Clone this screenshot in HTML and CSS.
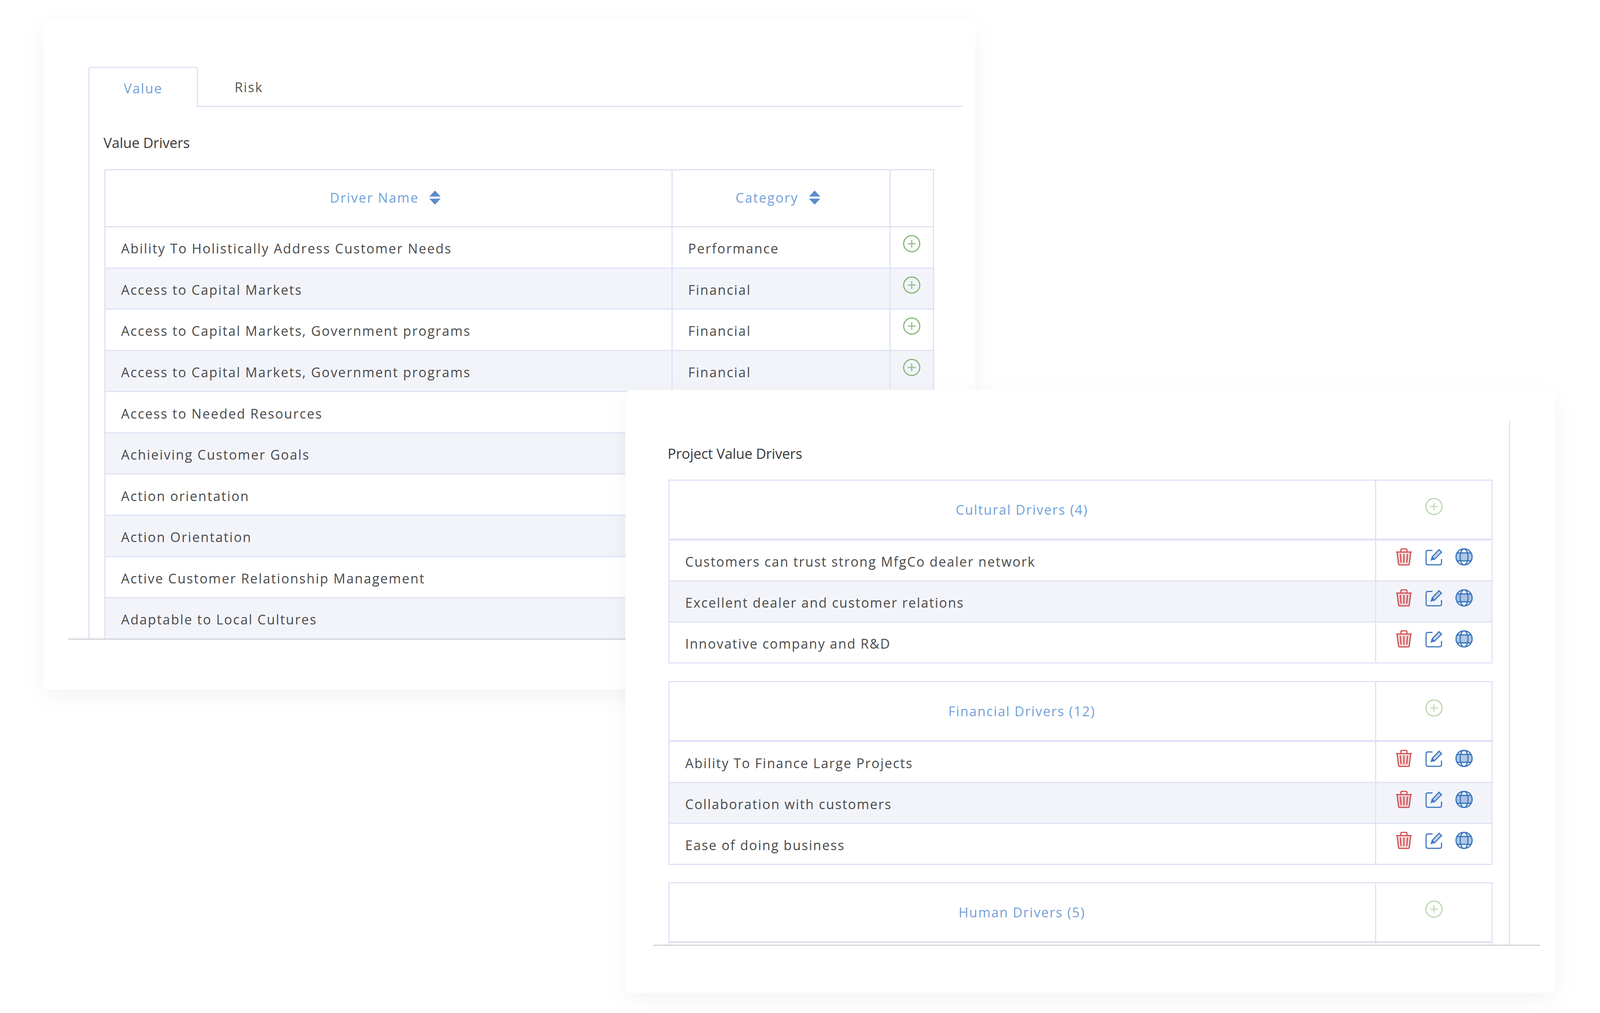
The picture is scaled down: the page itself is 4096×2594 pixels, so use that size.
FILE: index.html
```html
<!DOCTYPE html>
<html lang="en">
<head>
<meta charset="utf-8">
<title>Value Drivers</title>
<link rel="stylesheet" href="styles.css">
</head>
<body>
<svg class="defs" width="0" height="0" aria-hidden="true">
  <symbol id="i-plus" viewBox="0 0 48 48">
    <circle cx="24" cy="24" r="22.5" fill="none" stroke="currentColor" stroke-width="3"/>
    <path d="M24 13v22M13 24h22" fill="none" stroke="currentColor" stroke-width="3.400" opacity=".8"/>
  </symbol>
  <symbol id="i-sort" viewBox="0 0 32 40">
    <path d="M16 0 32 17H0ZM0 23H32L16 40Z" fill="currentColor"/>
  </symbol>
  <symbol id="i-trash" viewBox="0 0 46 48">
    <path d="M4 11 8 44q.5 2.500 3 2.500h24q2.500 0 3-2.500l4-33Z" fill="currentColor" opacity=".22"/>
    <path d="M1 10.500h44M14.500 10V5q0-3.500 3.500-3.500h10q3.500 0 3.500 3.500v5M4 11 8 44q.5 2.500 3 2.500h24q2.500 0 3-2.500l4-33M13 16l2 24M23 16v24M33 16l-2 24" fill="none" stroke="currentColor" stroke-width="3.200"/>
  </symbol>
  <symbol id="i-edit" viewBox="0 0 48 48">
    <path d="M20 6H7Q2 6 2 11v30q0 5 5 5h33q5 0 5-5V30" fill="none" stroke="currentColor" stroke-width="3.200"/>
    <path d="M19 24 38 4l7 7-20 20Z" fill="currentColor" opacity=".3"/>
    <path d="M19 24 38 4l7 7-20 20Z" fill="none" stroke="currentColor" stroke-width="3.200"/>
    <path d="M14 35 18 23 26 31Z" fill="currentColor"/>
  </symbol>
  <symbol id="i-globe" viewBox="0 0 48 48">
    <path d="M3 14H45V34H3Z" fill="currentColor" opacity=".4"/>
    <circle cx="24" cy="24" r="22.500" fill="none" stroke="currentColor" stroke-width="3.400"/>
    <ellipse cx="24" cy="24" rx="11" ry="22.500" fill="none" stroke="currentColor" stroke-width="3.400"/>
    <path d="M5 13H43M5 35H43" fill="none" stroke="currentColor" stroke-width="3.400"/>
  </symbol>
</svg>

<main class="desktop">
  <section class="card card-value">
    <div class="clip clip-value">
      <div class="tabs">
        <div class="tab tab-active">Value</div>
        <div class="tab">Risk</div>
      </div>
      <div class="pane">
        <h2 class="title">Value Drivers</h2>
        <div class="table">
          <div class="row row-head">
            <div class="cell cell-head">Driver Name<svg class="sort"><use href="#i-sort"/></svg></div>
            <div class="cell cell-head">Category<svg class="sort"><use href="#i-sort"/></svg></div>
            <div class="cell"></div>
          </div>
          <div class="row">
            <div class="cell">Ability To Holistically Address Customer Needs</div>
            <div class="cell">Performance</div>
            <div class="cell cell-add"><svg class="icon plus"><use href="#i-plus"/></svg></div>
          </div>
          <div class="row">
            <div class="cell">Access to Capital Markets</div>
            <div class="cell">Financial</div>
            <div class="cell cell-add"><svg class="icon plus"><use href="#i-plus"/></svg></div>
          </div>
          <div class="row">
            <div class="cell">Access to Capital Markets, Government programs</div>
            <div class="cell">Financial</div>
            <div class="cell cell-add"><svg class="icon plus"><use href="#i-plus"/></svg></div>
          </div>
          <div class="row">
            <div class="cell">Access to Capital Markets, Government programs</div>
            <div class="cell">Financial</div>
            <div class="cell cell-add"><svg class="icon plus"><use href="#i-plus"/></svg></div>
          </div>
          <div class="row"><div class="cell">Access to Needed Resources</div><div class="cell"></div><div class="cell"></div></div>
          <div class="row"><div class="cell">Achieiving Customer Goals</div><div class="cell"></div><div class="cell"></div></div>
          <div class="row"><div class="cell">Action orientation</div><div class="cell"></div><div class="cell"></div></div>
          <div class="row"><div class="cell">Action Orientation</div><div class="cell"></div><div class="cell"></div></div>
          <div class="row"><div class="cell">Active Customer Relationship Management</div><div class="cell"></div><div class="cell"></div></div>
          <div class="row"><div class="cell">Adaptable to Local Cultures</div><div class="cell"></div><div class="cell"></div></div>
        </div>
      </div>
    </div>
  </section>

  <section class="card card-project">
    <div class="clip clip-project">
      <div class="pane-project">
        <h2 class="title">Project Value Drivers</h2>

        <div class="group">
          <div class="g-head">
            <div class="cell cell-head">Cultural Drivers (4)</div>
            <div class="cell cell-gadd"><svg class="icon plus-soft"><use href="#i-plus"/></svg></div>
          </div>
          <div class="g-row">
            <div class="cell">Customers can trust strong MfgCo dealer network</div>
            <div class="cell cell-actions"><svg class="icon trash"><use href="#i-trash"/></svg><svg class="icon edit"><use href="#i-edit"/></svg><svg class="icon globe"><use href="#i-globe"/></svg></div>
          </div>
          <div class="g-row">
            <div class="cell">Excellent dealer and customer relations</div>
            <div class="cell cell-actions"><svg class="icon trash"><use href="#i-trash"/></svg><svg class="icon edit"><use href="#i-edit"/></svg><svg class="icon globe"><use href="#i-globe"/></svg></div>
          </div>
          <div class="g-row">
            <div class="cell">Innovative company and R&amp;D</div>
            <div class="cell cell-actions"><svg class="icon trash"><use href="#i-trash"/></svg><svg class="icon edit"><use href="#i-edit"/></svg><svg class="icon globe"><use href="#i-globe"/></svg></div>
          </div>
        </div>

        <div class="group">
          <div class="g-head">
            <div class="cell cell-head">Financial Drivers (12)</div>
            <div class="cell cell-gadd"><svg class="icon plus-soft"><use href="#i-plus"/></svg></div>
          </div>
          <div class="g-row">
            <div class="cell">Ability To Finance Large Projects</div>
            <div class="cell cell-actions"><svg class="icon trash"><use href="#i-trash"/></svg><svg class="icon edit"><use href="#i-edit"/></svg><svg class="icon globe"><use href="#i-globe"/></svg></div>
          </div>
          <div class="g-row">
            <div class="cell">Collaboration with customers</div>
            <div class="cell cell-actions"><svg class="icon trash"><use href="#i-trash"/></svg><svg class="icon edit"><use href="#i-edit"/></svg><svg class="icon globe"><use href="#i-globe"/></svg></div>
          </div>
          <div class="g-row">
            <div class="cell">Ease of doing business</div>
            <div class="cell cell-actions"><svg class="icon trash"><use href="#i-trash"/></svg><svg class="icon edit"><use href="#i-edit"/></svg><svg class="icon globe"><use href="#i-globe"/></svg></div>
          </div>
        </div>

        <div class="group">
          <div class="g-head">
            <div class="cell cell-head">Human Drivers (5)</div>
            <div class="cell cell-gadd"><svg class="icon plus-soft"><use href="#i-plus"/></svg></div>
          </div>
          <div class="g-row"><div class="cell"></div><div class="cell"></div></div>
        </div>
      </div>
    </div>
  </section>
</main>
</body>
</html>
```
FILE: styles.css
```css
* { box-sizing: border-box; }
html, body { margin: 0; padding: 0; background: #fff; }
body {
  width: 4096px;
  height: 2594px;
  overflow: hidden;
  font-family: "Open Sans", "Liberation Sans", sans-serif;
  font-size: 34px;
  color: #4a4a4a;
}
.defs { position: absolute; }
.desktop { position: relative; width: 4096px; height: 2594px; }

.card {
  position: absolute;
  background: #fff;
  border-radius: 14px;
  box-shadow: 0 16px 60px rgba(0, 0, 0, .05);
}
.card-value { left: 111px; top: 52px; width: 2386px; height: 1714px; }
.card-project { left: 1601px; top: 998px; width: 2381px; height: 1544px; }

.clip { overflow: hidden; border-bottom: 3px solid #d2d3d8; }
.clip-value { margin-left: 64px; width: 2288px; height: 1586px; padding-top: 119px; }
.clip-project { margin-left: 71px; margin-top: 80px; width: 2271px; height: 1344px; }

.tabs { display: flex; margin-left: 51px; height: 103px; border-bottom: 3px solid #dfe2f6; }
.tab {
  width: 260px;
  height: 100px;
  display: flex;
  align-items: center;
  justify-content: center;
  letter-spacing: 2.400px;
  color: #555;
  padding-top: 3px;
}
.tab-active {
  width: 281px;
  height: 103px;
  color: #72a0d8;
  background: #fff;
  border: 3px solid #dfe2f6;
  border-bottom: 0;
  border-radius: 6px 6px 0 0;
  padding-top: 4px;
}

.pane { margin-left: 51px; height: 1400px; border-left: 3px solid #dfe2f6; padding-left: 38px; }
.title {
  margin: 0 0 40px -2px;
  padding-top: 64px;
  font-size: 36px;
  line-height: 55px;
  font-weight: 400;
  color: #3a3a3a;
  letter-spacing: -.1px;
}

.table { width: 2124.5px; border-top: 3px solid #dfe2f6; border-left: 3px solid #dfe2f6; }
.row {
  display: grid;
  grid-template-columns: 1451.6px 558.900px 111px;
  height: 105.58px;
  border-bottom: 3px solid #dfe2f6;
}
.row:nth-child(odd) { background: #f2f4fa; }
.row.row-head { height: 146px; background: #fff; }
.cell {
  display: flex;
  align-items: center;
  padding: 6px 0 0 40px;
  border-right: 3px solid #dfe2f6;
  letter-spacing: 2.450px;
  white-space: nowrap;
}
.cell-head {
  justify-content: center;
  padding: 0 16px 4px 0;
  color: #72a0d8;
}
.cell-add { padding: 20px 0 0; align-items: flex-start; justify-content: center; }

.sort { width: 29px; height: 36px; margin-left: 27px; color: #5b8cc8; }
.icon { width: 44px; height: 44px; flex: none; }
.plus { color: #7db36c; }
.plus-soft { color: #b4d5a8; }
.trash { color: #cf4a4d; }
.edit, .globe { color: #3d78bd; }

.pane-project {
  width: 2194px;
  height: 1342px;
  border-right: 3px solid #dfe2f6;
  padding-left: 39px;
}
.pane-project .title { padding-top: 56px; margin-bottom: 39px; letter-spacing: -.2px; }

.group {
  width: 2110px;
  margin-bottom: 44.600px;
  border-top: 3px solid #dfe2f6;
  border-left: 3px solid #dfe2f6;
}
.g-head, .g-row { display: grid; grid-template-columns: 1809px 298px; }
.g-head { height: 153px; border-bottom: 5px solid #dfe2f6; }
.g-row { height: 105px; border-bottom: 3px solid #dfe2f6; }
.g-row:nth-child(odd) { background: #f2f4fa; }
.g-row .cell { letter-spacing: 2.250px; }
.g-head .cell-head { padding: 0 2px 0 0; letter-spacing: 2.150px; }
.cell-gadd { padding: 44px 0 0; align-items: flex-start; justify-content: center; }
.cell-actions { padding: 20px 0 0; gap: 33px; align-items: flex-start; justify-content: center; }
```
